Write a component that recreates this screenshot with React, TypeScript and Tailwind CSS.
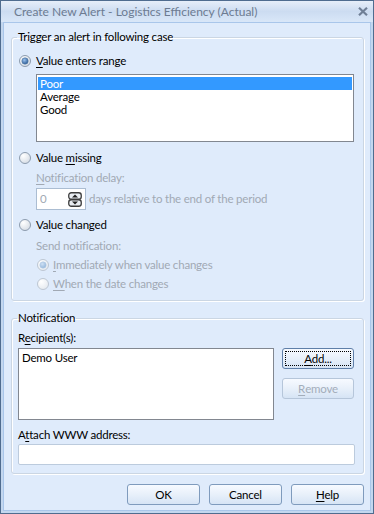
import React, { useId } from 'react';

const U = ({ children }: { children: React.ReactNode }) => (
  <span className="underline underline-offset-[2px] decoration-[1px]">{children}</span>
);

interface RadioProps {
  checked?: boolean;
  disabled?: boolean;
}

const Radio: React.FC<RadioProps> = ({ checked = false, disabled = false }) => {
  const id = useId().replace(/:/g, '');
  const ring = disabled ? '#bcc6d2' : '#8c9bae';
  const dotIn = disabled ? '#cfe1f4' : '#9cc3ef';
  const dotOut = disabled ? '#8fb3d9' : '#24558f';
  return (
    <svg width="12" height="12" viewBox="0 0 12 12" className="shrink-0">
      <defs>
        <radialGradient id={`bg${id}`} cx="0.35" cy="0.3" r="0.8">
          <stop offset="0" stopColor="#ffffff" />
          <stop offset="1" stopColor={disabled ? '#e3e8ee' : '#d3dae3'} />
        </radialGradient>
        <radialGradient id={`dot${id}`} cx="0.4" cy="0.35" r="0.7">
          <stop offset="0" stopColor={dotIn} />
          <stop offset="1" stopColor={dotOut} />
        </radialGradient>
      </defs>
      <circle cx="6" cy="6" r="5.5" fill={`url(#bg${id})`} stroke={ring} />
      {checked && <circle cx="6" cy="6" r="3.2" fill={`url(#dot${id})`} stroke={disabled ? '#b7cde6' : '#5a7fa8'} strokeWidth="0.6" />}
    </svg>
  );
};

interface BtnProps {
  children: React.ReactNode;
  className?: string;
  disabled?: boolean;
  focused?: boolean;
}

const Btn: React.FC<BtnProps> = ({ children, className = '', disabled = false, focused = false }) => (
  <div
    className={`h-[21px] flex p-[2px] rounded-[3px] border bg-gradient-to-b from-[#f7faff] via-[#e8f0fa] to-[#d6e4f5] ${
      disabled ? 'border-[#b6c6da] text-[#a3adba]' : focused ? 'border-[#5f7fa8] text-black' : 'border-[#7f9bbd] text-black'
    } ${className}`}
  >
    <div
      className={`flex-1 flex items-center justify-center border ${
        focused ? 'border-dotted border-black' : 'border-transparent'
      }`}
    >
      {children}
    </div>
  </div>
);

const Spinner = () => (
  <svg width="14" height="15" viewBox="0 0 14 15" className="shrink-0">
    <rect x="0.75" y="0.75" width="12.5" height="6.5" rx="2.5" fill="#e9edf2" stroke="#3c3c3c" strokeWidth="1.3" />
    <rect x="0.75" y="7.75" width="12.5" height="6.5" rx="2.5" fill="#e9edf2" stroke="#3c3c3c" strokeWidth="1.3" />
    <path d="M4 5.6 L7 2.6 L10 5.6Z" fill="#1e1e1e" />
    <path d="M4 9.4 L7 12.4 L10 9.4Z" fill="#1e1e1e" />
  </svg>
);

export default function App() {
  const gray = 'text-[#a1a9b4]';
  return (
    <div className="w-[374px] h-[514px] flex flex-col border border-[#4f6c8f] bg-[#c3d7ef] font-['Segoe_UI',Lato,sans-serif] text-[11.5px] tracking-[-0.2px] leading-[16px] text-black select-none">
      <div className="h-[21px] shrink-0 flex items-center justify-between pl-[13px] pr-[5px] bg-gradient-to-b from-[#e6eef9] via-[#ccdcf1] to-[#d9e7f8]">
        <span className="text-[12px] tracking-normal text-[#6c7b91]">Create New Alert - Logistics Efficiency (Actual)</span>
        <svg width="10" height="9" viewBox="0 0 10 9">
          <path d="M1 0.8 L9 8.2 M9 0.8 L1 8.2" stroke="#6f7f96" strokeWidth="2.2" />
        </svg>
      </div>

      <div className="flex-1 mx-[2px] mb-[2px] border border-[#a9c6ea] bg-[#dfebfb] flex flex-col">
        <fieldset className="mt-[7px] ml-[7px] mr-[6px] border border-[#cbd6e3] rounded-[3px] shadow-[inset_1px_1px_0_#ffffff,1px_1px_0_#ffffff] px-0 pt-0 pb-[8px] flex flex-col">
          <legend className="ml-[5px] px-[1px] leading-[14px]">Trigger an alert in following case</legend>

          <div className="mt-[9px] h-[16px] ml-[7px] flex items-center gap-[5px]">
            <Radio checked />
            <span><U>V</U>alue enters range</span>
          </div>

          <div className="mt-[5px] ml-[24px] mr-[9px] h-[68px] border border-[#828790] bg-white pt-[2px] px-[1px] flex flex-col">
            <div className="h-[13px] leading-[13px] bg-[#3399ff] text-white pl-[2px]">Poor</div>
            <div className="h-[13px] leading-[13px] pl-[2px]">Average</div>
            <div className="h-[13px] leading-[13px] pl-[2px]">Good</div>
          </div>

          <div className="mt-[8px] h-[16px] ml-[7px] flex items-center gap-[5px]">
            <Radio />
            <span>Value <U>m</U>issing</span>
          </div>

          <div className={`mt-[4px] h-[16px] ml-[24px] ${gray}`}><U>N</U>otification delay:</div>

          <div className="mt-[2px] ml-[24px] h-[22px] flex items-center gap-[3px]">
            <div className="w-[50px] h-[22px] border border-[#abbdd2] bg-white flex items-center justify-between pl-[3px] pr-[3px]">
              <span className={gray}>0</span>
              <Spinner />
            </div>
            <span className={gray}>days relative to the end of the period</span>
          </div>

          <div className="mt-[7px] h-[16px] ml-[7px] flex items-center gap-[5px]">
            <Radio />
            <span>Va<U>l</U>ue changed</span>
          </div>

          <div className={`mt-[5px] h-[16px] ml-[24px] ${gray}`}>Send notification:</div>

          <div className={`mt-[3px] h-[16px] ml-[25px] flex items-center gap-[4px] ${gray}`}>
            <Radio checked disabled />
            <span><U>I</U>mmediately when value changes</span>
          </div>

          <div className={`mt-[3px] h-[16px] ml-[25px] flex items-center gap-[4px] ${gray}`}>
            <Radio disabled />
            <span><U>W</U>hen the date changes</span>
          </div>
        </fieldset>

        <fieldset className="mt-[10px] ml-[7px] mr-[6px] border border-[#cbd6e3] rounded-[3px] shadow-[inset_1px_1px_0_#ffffff,1px_1px_0_#ffffff] pl-[6px] pr-[8px] pt-0 pb-[8px] flex flex-col">
          <legend className="-ml-[1px] px-[1px] leading-[14px]">Notification</legend>

          <div className="mt-[5px] h-[16px]">R<U>e</U>cipient(s):</div>

          <div className="mt-[2px] flex gap-[8px]">
            <div className="w-[256px] h-[72px] border border-[#828790] bg-white pl-[3px] pt-[1px]">Demo User</div>
            <div className="w-[72px] flex flex-col gap-[9px]">
              <Btn focused><U>A</U>dd...</Btn>
              <Btn disabled><U>R</U>emove</Btn>
            </div>
          </div>

          <div className="mt-[7px] h-[16px]">A<U>t</U>tach WWW address:</div>

          <div className="mt-[1px] h-[21px] border border-[#bccbdd] bg-white rounded-[2px]" />
        </fieldset>

        <div className="mt-[10px] mr-[6px] flex justify-end gap-[9px]">
          <Btn className="w-[73px]">OK</Btn>
          <Btn className="w-[73px]">Cancel</Btn>
          <Btn className="w-[73px]"><U>H</U>elp</Btn>
        </div>
      </div>
    </div>
  );
}
